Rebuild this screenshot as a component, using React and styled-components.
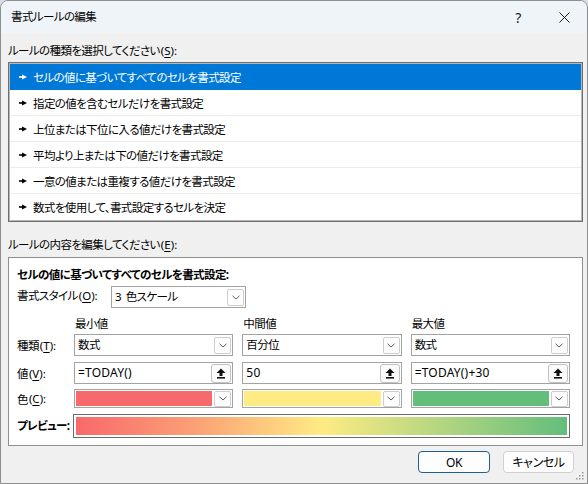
import styled, { createGlobalStyle } from 'styled-components'

const GlobalStyle = createGlobalStyle`
  html, body {
    margin: 0;
    padding: 0;
    background: #d9dde3;
  }
  body {
    font-family: "Noto Sans", "Noto Sans CJK JP", sans-serif;
    font-feature-settings: "palt";
    font-size: 11.5px;
    letter-spacing: -0.6px;
    color: #000;
  }
`

const Window = styled.div`
  width: 588px;
  height: 484px;
  box-sizing: border-box;
  border: 1px solid #8e8e8e;
  border-radius: 8px 8px 0 0;
  background: #f0f0f0;
  overflow: hidden;
  position: relative;
`

const TitleBar = styled.div`
  height: 32px;
  background: #eff4f9;
  display: flex;
  align-items: center;
  padding-left: 10px;
`

const Title = styled.div`
  flex: 1;
  line-height: 16px;
`

const TitleButton = styled.div`
  width: 46px;
  height: 32px;
  display: flex;
  align-items: center;
  justify-content: center;
  font-size: 14px;
  color: #1a1a1a;
`

const Content = styled.div`
  padding: 0 4px 0 7px;
`

const SectionLabel = styled.div`
  line-height: 16px;
  margin-top: ${(p) => p.$top}px;
`

const Access = styled.span`
  letter-spacing: 0;
  margin-left: 1px;

  u {
    text-underline-offset: 2px;
  }
`

const ListBox = styled.div`
  margin-top: 3px;
  border: 1px solid #6e6e6e;
  box-shadow: inset 0 0 0 1px #b8b8b8;
  background: #fff;
  padding: 1px;
`

const ListItem = styled.div`
  height: 26px;
  box-sizing: border-box;
  display: flex;
  align-items: center;
  gap: 6px;
  padding-left: 9px;
  background: ${(p) => (p.$selected ? '#0078d7' : '#fff')};
  color: ${(p) => (p.$selected ? '#fff' : '#000')};
  border-bottom: 1px solid ${(p) => (p.$selected || p.$last ? 'transparent' : '#ececec')};
`

const Panel = styled.div`
  margin-top: 4px;
  border: 1px solid #8f8f8f;
  background: #fff;
  padding: 9px 12px 7px 8px;
`

const Heading = styled.div`
  font-weight: bold;
  line-height: 16px;
`

const StyleRow = styled.div`
  display: flex;
  align-items: center;
  margin-top: 3px;
`

const StyleLabel = styled.div`
  width: 94px;
  line-height: 16px;
  padding-bottom: 2px;
`

const Grid = styled.div`
  display: grid;
  grid-template-columns: 48px 1fr 1fr 1fr;
  grid-template-rows: 18px 28px 27px 19px;
  column-gap: 9px;
  align-items: start;
  margin-top: 8px;
`

const ColHead = styled.div`
  line-height: 16px;
  padding-left: 1px;
`

const RowLabel = styled.div`
  height: ${(p) => p.$h}px;
  display: flex;
  align-items: center;
  white-space: nowrap;
`

const Field = styled.div`
  height: ${(p) => p.$h || 22}px;
  width: ${(p) => (p.$w ? `${p.$w}px` : 'auto')};
  box-sizing: border-box;
  border: 1px solid #a3a3a3;
  background: #fff;
  display: flex;
  align-items: center;
  padding: 0 1px 0 ${(p) => (p.$swatch ? 1 : 3)}px;
`

const FieldText = styled.div`
  flex: 1;
  line-height: 16px;
  white-space: pre;
  overflow: hidden;
  font-size: ${(p) => (p.$latin ? '12px' : 'inherit')};
  letter-spacing: ${(p) => (p.$latin ? '0.2px' : 'inherit')};
`

const Swatch = styled.div`
  flex: 1;
  height: 15px;
  margin-right: 2px;
  background: ${(p) => p.$color};
`

const DropButton = styled.div`
  width: 17px;
  height: ${(p) => p.$h || 17}px;
  box-sizing: border-box;
  border: 1px solid #cdcdcd;
  border-radius: 2px;
  background: #fdfdfd;
  display: flex;
  align-items: center;
  justify-content: center;
`

const RefButton = styled.div`
  width: 20px;
  height: 19px;
  box-sizing: border-box;
  border: 1px solid #c2c2c2;
  border-radius: 3px;
  background: #fbfbfb;
  display: flex;
  align-items: center;
  justify-content: center;
`

const PreviewRow = styled.div`
  display: flex;
  align-items: center;
  margin-top: 6px;
`

const PreviewLabel = styled.div`
  width: 56px;
  font-weight: bold;
  line-height: 16px;
  white-space: nowrap;
`

const PreviewBar = styled.div`
  flex: 1;
  height: 24px;
  box-sizing: border-box;
  border: 1px solid #6a6a6a;
  padding: 2px;
  background: #fff;
`

const Gradient = styled.div`
  height: 100%;
  background: linear-gradient(to right, #f8696b 0%, #fba276 25%, #ffeb84 50%, #b1d580 75%, #63be7b 100%);
`

const ButtonRow = styled.div`
  display: flex;
  justify-content: flex-end;
  gap: 13px;
  margin-top: 5px;
  padding-right: 9px;
`

const Button = styled.button`
  width: ${(p) => p.$w}px;
  height: 22px;
  box-sizing: border-box;
  font-family: inherit;
  font-feature-settings: "palt";
  font-size: 12px;
  letter-spacing: -0.4px;
  color: #000;
  background: #fdfdfd;
  border: ${(p) => (p.$default ? '1.5px solid #1e5f8f' : '1px solid #d0d0d0')};
  border-radius: 4px;
  padding: 0;
`

const Grip = styled.svg`
  position: absolute;
  right: 2px;
  bottom: 2px;
`

const Pointer = () => (
  <svg width="8" height="6" viewBox="0 0 8 6">
    <rect x="0" y="2.2" width="4" height="1.6" fill="currentColor" />
    <path d="M3 0.6 L8 3 L3 5.4 Z" fill="currentColor" />
  </svg>
)

const Chevron = () => (
  <svg width="8" height="5" viewBox="0 0 8 5">
    <path d="M0.5 0.8 L4 4 L7.5 0.8" fill="none" stroke="#606060" strokeWidth="1" />
  </svg>
)

const UpArrow = () => (
  <svg width="10" height="11" viewBox="0 0 10 11">
    <path d="M5 0.5 L9.5 5 H6.5 V8 H3.5 V5 H0.5 Z" fill="#111" />
    <rect x="1" y="9" width="8" height="1.6" fill="#111" />
  </svg>
)

const Key = ({ k }) => (
  <Access>
    (<u>{k}</u>):
  </Access>
)

const rules = [
  'セルの値に基づいてすべてのセルを書式設定',
  '指定の値を含むセルだけを書式設定',
  '上位または下位に入る値だけを書式設定',
  '平均より上または下の値だけを書式設定',
  '一意の値または重複する値だけを書式設定',
  '数式を使用して、書式設定するセルを決定',
]

const columns = [
  { head: '最小値', type: '数式', value: '=TODAY()', color: '#f8696b' },
  { head: '中間値', type: '百分位', value: '50', color: '#ffeb84' },
  { head: '最大値', type: '数式', value: '=TODAY()+30', color: '#63be7b' },
]

const Select = ({ text, w }) => (
  <Field $w={w}>
    <FieldText>{text}</FieldText>
    <DropButton>
      <Chevron />
    </DropButton>
  </Field>
)

export default function App() {
  return (
    <>
      <GlobalStyle />
      <Window>
        <TitleBar>
          <Title>書式ルールの編集</Title>
          <TitleButton>?</TitleButton>
          <TitleButton>
            <svg width="11" height="11" viewBox="0 0 11 11">
              <path d="M0.5 0.5 L10.5 10.5 M10.5 0.5 L0.5 10.5" stroke="#1a1a1a" strokeWidth="1" />
            </svg>
          </TitleButton>
        </TitleBar>
        <Content>
          <SectionLabel $top={10}>
            ルールの種類を選択してください<Key k="S" />
          </SectionLabel>
          <ListBox>
            {rules.map((r, i) => (
              <ListItem key={r} $selected={i === 0} $last={i === rules.length - 1}>
                <Pointer />
                {r}
              </ListItem>
            ))}
          </ListBox>
          <SectionLabel $top={15}>
            ルールの内容を編集してください<Key k="E" />
          </SectionLabel>
          <Panel>
            <Heading>セルの値に基づいてすべてのセルを書式設定:</Heading>
            <StyleRow>
              <StyleLabel>
                書式スタイル<Key k="O" />
              </StyleLabel>
              <Select text="3  色スケール" w={135} />
            </StyleRow>
            <Grid>
              <div />
              {columns.map((c) => (
                <ColHead key={c.head}>{c.head}</ColHead>
              ))}
              <RowLabel $h={22}>
                種類<Key k="T" />
              </RowLabel>
              {columns.map((c) => (
                <Select key={c.head} text={c.type} />
              ))}
              <RowLabel $h={22}>
                値<Key k="V" />
              </RowLabel>
              {columns.map((c) => (
                <Field key={c.head}>
                  <FieldText $latin>{c.value}</FieldText>
                  <RefButton>
                    <UpArrow />
                  </RefButton>
                </Field>
              ))}
              <RowLabel $h={19}>
                色<Key k="C" />
              </RowLabel>
              {columns.map((c) => (
                <Field key={c.head} $h={19} $swatch>
                  <Swatch $color={c.color} />
                  <DropButton $h={16}>
                    <Chevron />
                  </DropButton>
                </Field>
              ))}
            </Grid>
            <PreviewRow>
              <PreviewLabel>プレビュー:</PreviewLabel>
              <PreviewBar>
                <Gradient />
              </PreviewBar>
            </PreviewRow>
          </Panel>
          <ButtonRow>
            <Button $w={72} $default>
              OK
            </Button>
            <Button $w={71}>キャンセル</Button>
          </ButtonRow>
        </Content>
        <Grip width="10" height="10" viewBox="0 0 10 10">
          {[
            [8, 2],
            [8, 5],
            [5, 5],
            [8, 8],
            [5, 8],
            [2, 8],
          ].map(([x, y]) => (
            <rect key={`${x}-${y}`} x={x - 1} y={y - 1} width="1.5" height="1.5" fill="#9a9a9a" />
          ))}
        </Grip>
      </Window>
    </>
  )
}
